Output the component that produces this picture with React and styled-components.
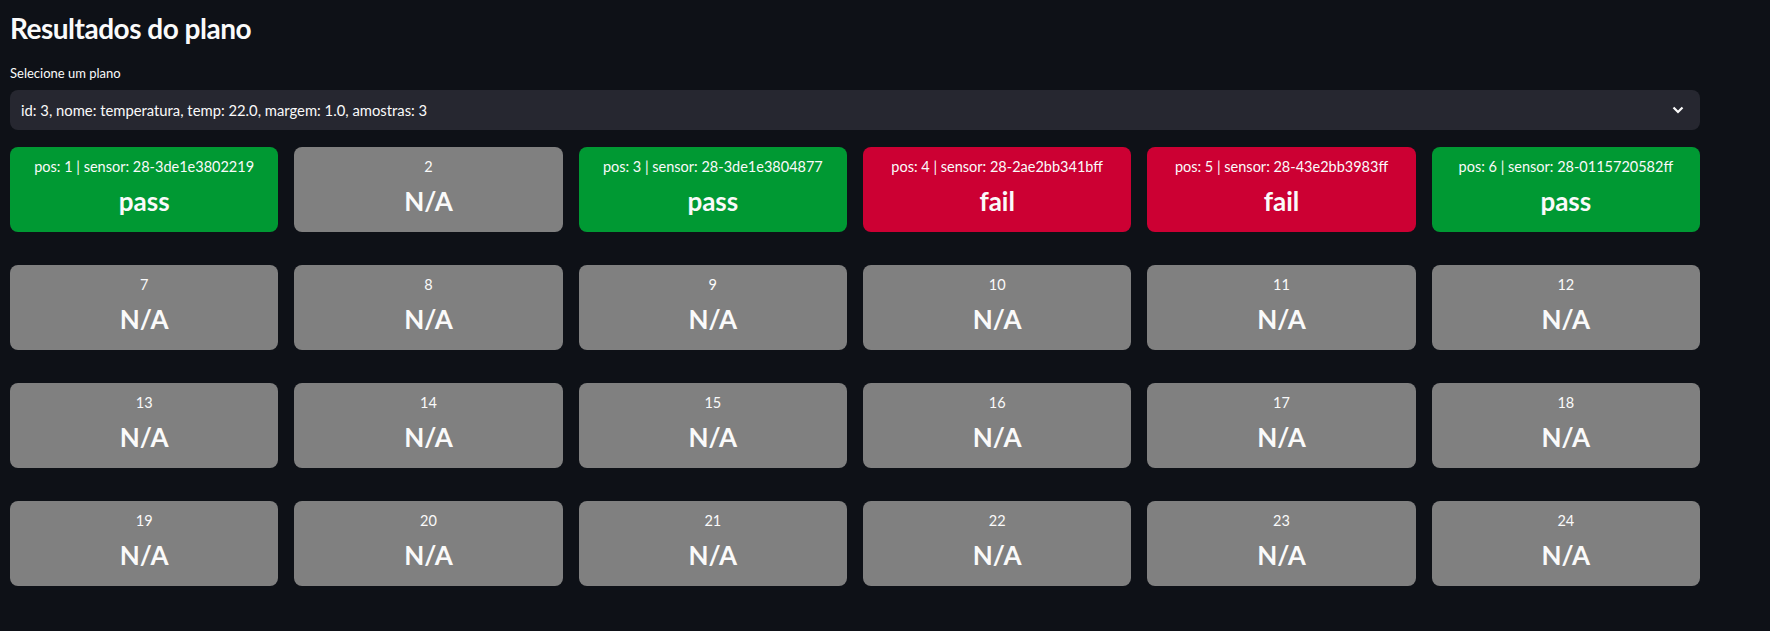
import React from "react";
import styled, { createGlobalStyle } from "styled-components";

const GlobalStyle = createGlobalStyle`
  body {
    margin: 0;
    background-color: #0e1117;
    font-family: Lato, "Liberation Sans", sans-serif;
    color: #fafafa;
  }
`;

// page & header
const Page = styled.div`
  padding: 6px 70px 40px 10px;
`;
const Title = styled.h3`
  margin: 0;
  font-size: 28px;
  font-weight: 700;
  line-height: 44px;
  letter-spacing: -0.5px;
`;
const Label = styled.label`
  display: block;
  margin-top: 13px;
  font-size: 13px;
  line-height: 20px;
`;

// select box
const Select = styled.div`
  margin-top: 7px;
  height: 40px;
  display: flex;
  align-items: center;
  justify-content: space-between;
  padding: 0 16px 0 11px;
  background-color: #262730;
  border-radius: 8px;
  font-size: 14.8px;
`;
const Chevron = styled.svg`
  width: 12px;
  height: 8px;
`;

// results grid
const Grid = styled.div`
  margin-top: 17px;
  display: grid;
  grid-template-columns: repeat(6, 1fr);
  column-gap: 16px;
  row-gap: 33px;
`;
const Card = styled.div`
  height: 85px;
  border-radius: 8px;
  background-color: ${({ $status }) =>
    $status === "pass" ? "#009933" : $status === "fail" ? "#cc0033" : "#808080"};
  display: flex;
  flex-direction: column;
  align-items: center;
  padding-top: 10px;
  box-sizing: border-box;
`;
const Info = styled.div`
  font-size: 14.5px;
  line-height: 20px;
`;
const Result = styled.div`
  margin-top: 8px;
  font-size: 26px;
  font-weight: 700;
  line-height: 32px;
`;

const sensors = {
  1: { id: "28-3de1e3802219", status: "pass" },
  3: { id: "28-3de1e3804877", status: "pass" },
  4: { id: "28-2ae2bb341bff", status: "fail" },
  5: { id: "28-43e2bb3983ff", status: "fail" },
  6: { id: "28-0115720582ff", status: "pass" },
};

const positions = Array.from({ length: 24 }, (_, i) => i + 1);

const App = () => {
  return (
    <>
      <GlobalStyle />
      <Page>
        <Title>Resultados do plano</Title>
        <Label>Selecione um plano</Label>
        <Select>
          id: 3, nome: temperatura, temp: 22.0, margem: 1.0, amostras: 3
          <Chevron viewBox="0 0 12 8">
            <path d="M1.5 1.5 L6 6 L10.5 1.5" fill="none" stroke="#fafafa" strokeWidth="2.2" />
          </Chevron>
        </Select>
        <Grid>
          {positions.map((pos) => {
            const s = sensors[pos];
            return (
              <Card key={pos} $status={s ? s.status : "na"}>
                <Info>{s ? `pos: ${pos} | sensor: ${s.id}` : pos}</Info>
                <Result>{s ? s.status : "N/A"}</Result>
              </Card>
            );
          })}
        </Grid>
      </Page>
    </>
  );
};

export default App;
